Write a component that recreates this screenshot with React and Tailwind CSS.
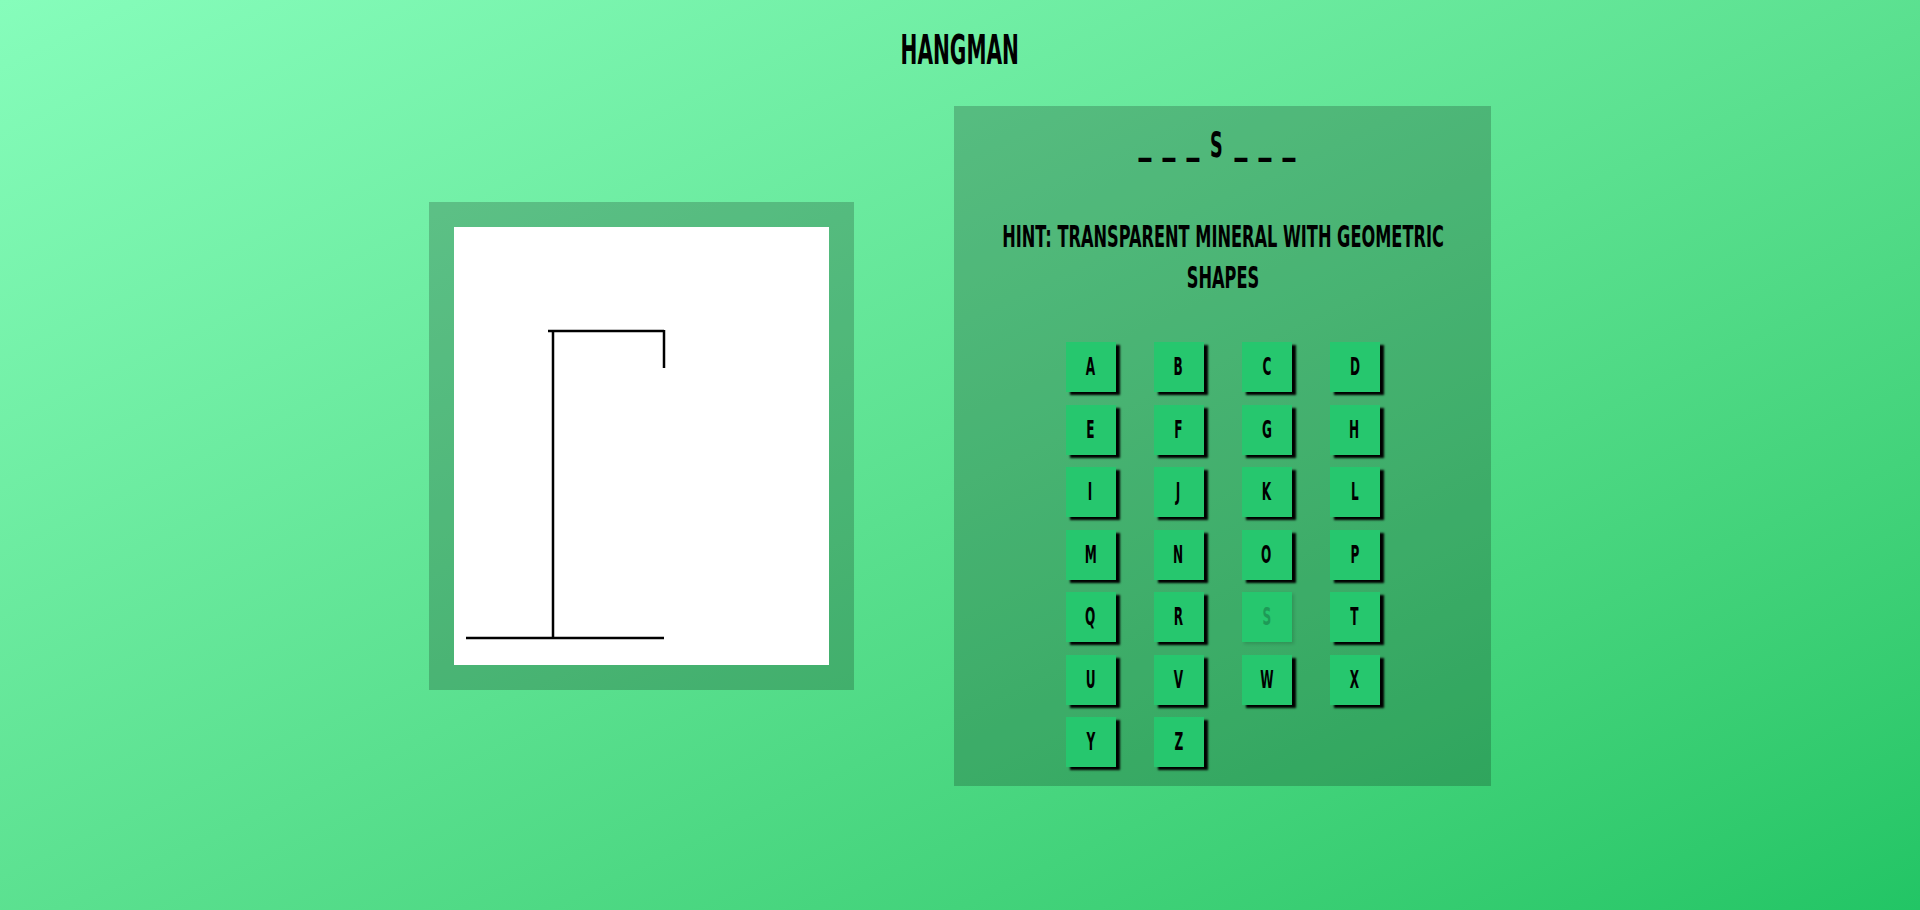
import React from 'react'

const letters = 'ABCDEFGHIJKLMNOPQRSTUVWXYZ'.split('')
const guessed = ['S']
const word = 'CRYSTAL'

const Gallows = () => (
  <svg width="375" height="438" viewBox="0 0 375 438" className="block bg-white">
    <g stroke="#000" strokeWidth="2.5" fill="none">
      <line x1="12" y1="411" x2="210" y2="411" />
      <line x1="99" y1="104" x2="99" y2="411" />
      <line x1="94" y1="104" x2="210" y2="104" />
      <line x1="210" y1="103" x2="210" y2="141" />
    </g>
  </svg>
)

// narrow display face: squeeze the condensed fallback sideways
const squeeze = 'inline-block scale-x-[0.56] origin-center'

const LetterButton = ({ letter, used }) => (
  <button
    type="button"
    disabled={used}
    className={`w-[50px] h-[50px] bg-[#26c76e] text-[24px] font-bold leading-none flex items-center justify-center ${
      used ? 'text-[#1e9a57] shadow-[2px_2px_3px_rgba(0,0,0,0.15)]' : 'text-black shadow-[4px_3px_2px_#000]'
    }`}
  >
    <span className={squeeze}>{letter}</span>
  </button>
)

const WordSlots = () => (
  <div className="h-[44px] pr-[12px] flex items-baseline justify-center gap-[11px] text-[35px] font-bold leading-none">
    {word.split('').map((ch, i) =>
      guessed.includes(ch) ? (
        <span key={i} className="w-[13px] flex justify-center">
          <span className={squeeze}>{ch}</span>
        </span>
      ) : (
        <span key={i} className="w-[13px] flex justify-center text-[44px] -translate-y-[6px]">
          <span className="inline-block scale-x-[0.65]">_</span>
        </span>
      )
    )}
  </div>
)

export default function App() {
  return (
    <div className="min-h-screen w-full bg-gradient-to-br from-[#86fdbb] to-[#22c565] font-['Liberation_Sans_Narrow','DejaVu_Sans_Condensed',sans-serif] text-black">
      <h1 className="pt-[30px] text-center text-[40px] font-bold leading-none">
        <span className={squeeze}>HANGMAN</span>
      </h1>
      <div className="mt-[36px] flex items-center justify-center gap-[100px]">
        <div className="bg-black/20 p-[25px]">
          <Gallows />
        </div>
        <div className="w-[537px] bg-black/20 pt-[14px] pb-[19px] flex flex-col items-center">
          <WordSlots />
          <div className="mt-[52px] w-[460px] h-[82px] flex justify-center">
            <p className="shrink-0 w-[790px] scale-x-[0.6] text-center text-[30px] font-bold leading-[41px]">
              HINT: TRANSPARENT MINERAL WITH GEOMETRIC SHAPES
            </p>
          </div>
          <div className="mt-[44px] grid grid-cols-[repeat(4,50px)] gap-x-[38px] gap-y-[12.5px]">
            {letters.map((l) => (
              <LetterButton key={l} letter={l} used={guessed.includes(l)} />
            ))}
          </div>
        </div>
      </div>
    </div>
  )
}
